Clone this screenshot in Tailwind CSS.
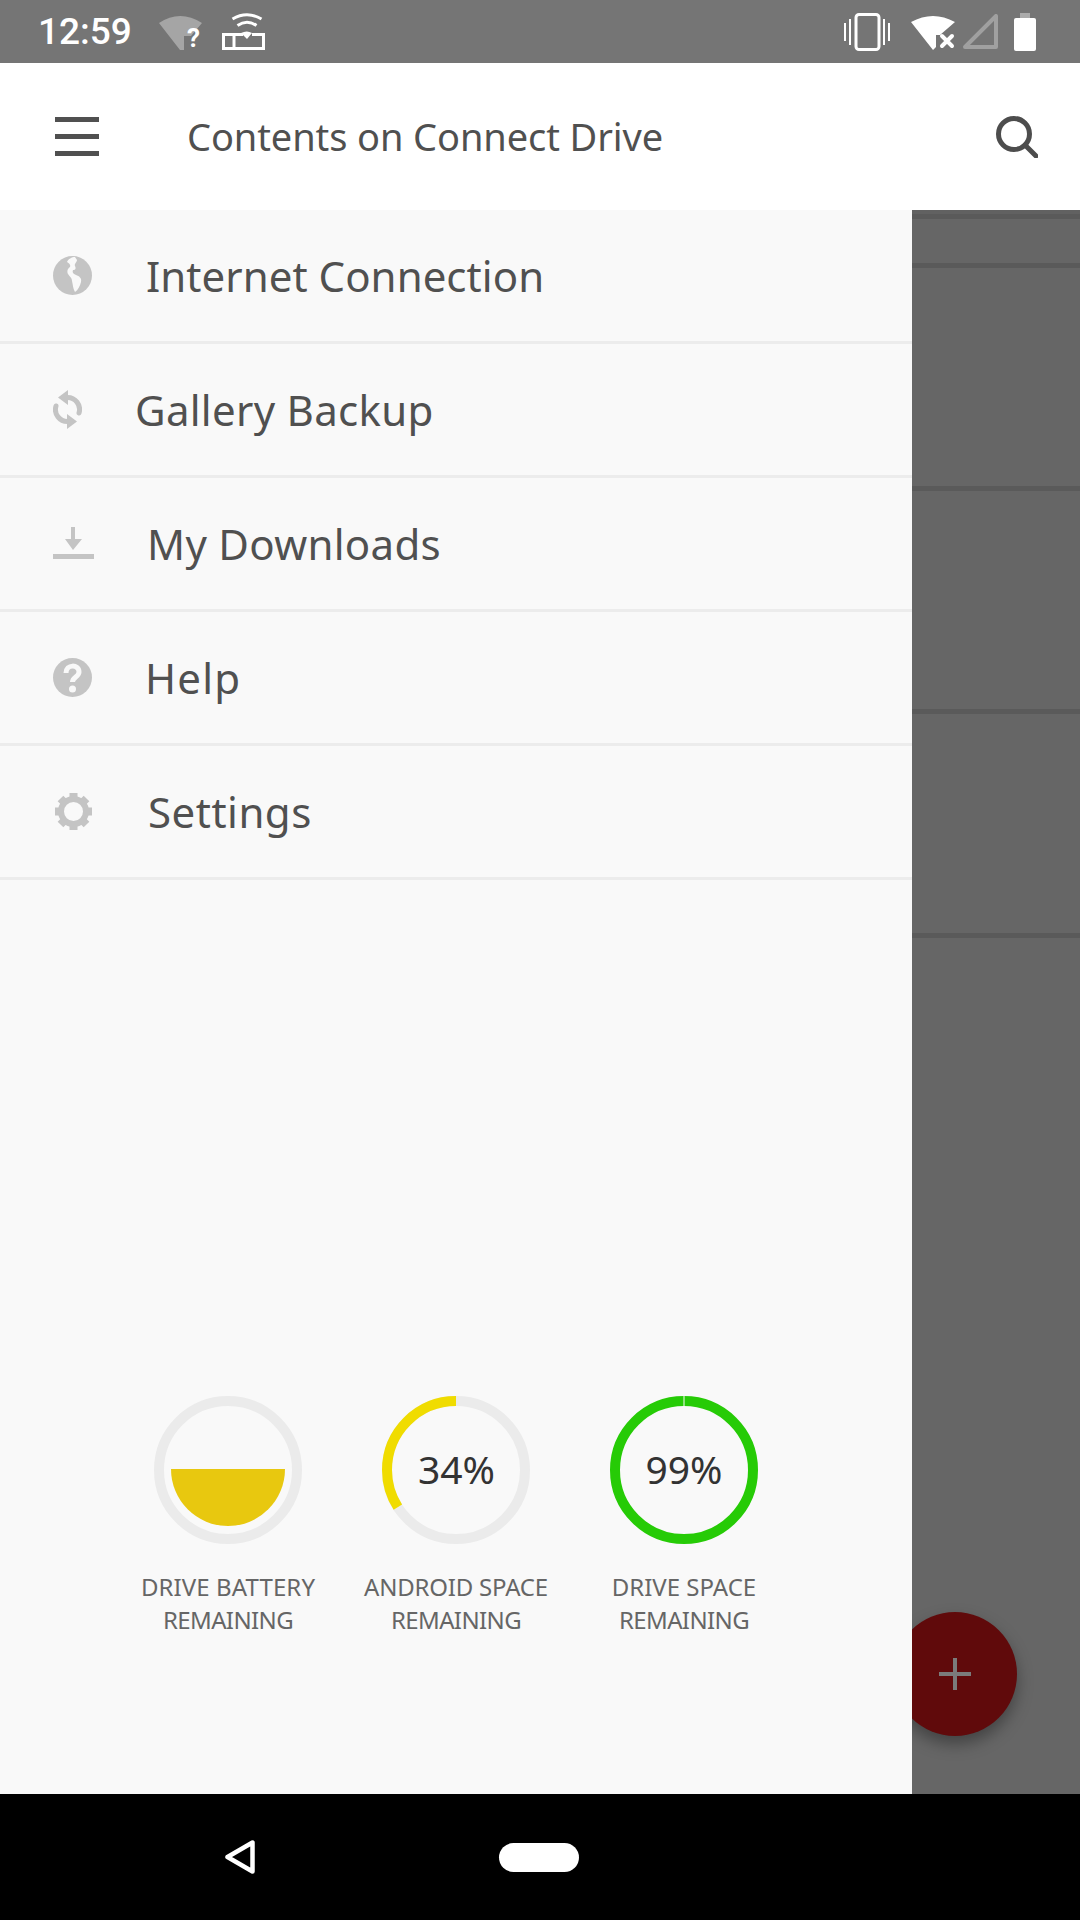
<!DOCTYPE html>
<html lang="en">
<head>
    <meta charset="UTF-8">
    <title>Contents on Connect Drive</title>
    <script src="https://cdn.jsdelivr.net/npm/@tailwindcss/browser@4"></script>
</head>
<body class="bg-black">
<div class="relative w-[1080px] h-[1920px] flex flex-col overflow-hidden font-['Noto_Sans',sans-serif]">

    <!-- status bar -->
    <div class="h-[63px] bg-[#757575] flex items-center justify-between shrink-0">
        <div class="flex items-center pl-[38px]">
            <span class="text-[37px] font-medium text-white font-['Roboto',sans-serif] leading-[44px] w-[121px]">12:59</span>
            <div class="relative w-[43px] h-[36px]">
                <svg class="w-[43px] h-[36px]" viewBox="0 0 43 36">
                    <path d="M0 9 Q21 -5 43 9 L32 22 L25 22 L25 36 L21 36 Z" fill="#a5a5a5"/>
                </svg>
                <span class="absolute left-[28px] top-[9px] text-[26px] leading-[30px] font-bold text-white font-['Roboto',sans-serif]">?</span>
            </div>
            <svg class="w-[44px] h-[38px] ml-[20px]" viewBox="0 0 44 38" fill="none" stroke="#fff" stroke-width="3">
                <path d="M10.5 6 Q25 -2.5 39.5 6"/>
                <path d="M15.5 12.5 Q25 6 34.5 12.5"/>
                <path d="M19 20 Q25 17 30 20 L25 26 Z" fill="#fff" stroke="none"/>
                <path d="M21 21.5 H1.5 V35.5 H41.5 V21.5 H30"/>
                <path d="M12 21.5 V35.5"/>
            </svg>
        </div>
        <div class="flex items-center pr-[44px]">
            <svg class="w-[46px] h-[38px]" viewBox="0 0 46 38" fill="none" stroke="#fff">
                <rect x="12" y="1.5" width="23" height="35" rx="3" stroke-width="3"/>
                <path d="M1 10 V28 M6 6 V32 M40 6 V32 M45 10 V28" stroke-width="2"/>
            </svg>
            <svg class="w-[44px] h-[36px] ml-[21px]" viewBox="0 0 44 36">
                <path d="M0 8 Q22 -4 44 8 L29 21 L25 21 L25 33 L22 36 Z" fill="#fff"/>
                <path d="M31 22 L41 32 M41 22 L31 32" stroke="#fff" stroke-width="4" stroke-linecap="round"/>
            </svg>
            <svg class="w-[35px] h-[35px] ml-[8px]" viewBox="0 0 35 35" fill="none">
                <path d="M33 2 V33 H2 Z" stroke="#a0a0a0" stroke-width="4" stroke-linejoin="round"/>
            </svg>
            <div class="ml-[16px] flex flex-col items-center">
                <div class="w-[10px] h-[5px] bg-[#ababab]"></div>
                <div class="w-[22px] h-[33px] bg-white rounded-[2px]"></div>
            </div>
        </div>
    </div>

    <!-- app bar -->
    <header class="h-[147px] bg-white flex items-center shrink-0">
        <div class="ml-[55px] w-[44px] flex flex-col gap-[12px]">
            <div class="h-[5px] bg-[#505050]"></div>
            <div class="h-[5px] bg-[#505050]"></div>
            <div class="h-[5px] bg-[#505050]"></div>
        </div>
        <h1 class="ml-[88px] text-[38px] text-[#505050] tracking-[-0.1px]">Contents on Connect Drive</h1>
        <svg class="ml-auto mr-[42px] w-[42px] h-[42px]" viewBox="0 0 42 42" fill="none" stroke="#4d4d4d">
            <circle cx="18" cy="18" r="15.5" stroke-width="5"/>
            <path d="M29 29 L40 40" stroke-width="5" stroke-linecap="round"/>
        </svg>
    </header>

    <div class="flex flex-1 min-h-0">
        <!-- drawer -->
        <aside class="w-[912px] bg-[#f9f9f9] flex flex-col shrink-0 z-10">
            <a class="h-[134px] flex items-center pl-[53px] gap-[54px] border-b-[3px] border-[#ececec]">
                <svg class="w-[39px] h-[39px]" viewBox="0 0 39 39">
                    <circle cx="19.5" cy="19.5" r="19.5" fill="#c4c4c4"/>
                    <path d="M22 1 C19 1 15 3 14 6 C16 7 18 9 17 11 C14 13 14 16 15 18 C17 21 19 22 19 25 C20 29 20 33 22 36 C25 34 27 30 28 26 C29 22 26 20 23 19 C20 18 19 16 20 14 C23 14 23 12 22 10 C21 8 24 6 24 4 Z" fill="#f9f9f9"/>
                </svg>
                <span class="text-[42px] text-[#505050] tracking-[0.05px]">Internet Connection</span>
            </a>
            <a class="h-[134px] flex items-center pl-[53px] gap-[53px] border-b-[3px] border-[#ececec]">
                <svg class="w-[29px] h-[39px]" viewBox="0 0 29 39" fill="none" stroke="#c4c4c4" stroke-width="5">
                    <path d="M14 7.5 A12 12 0 0 1 26 23" stroke-linecap="round"/>
                    <path d="M15 31.5 A12 12 0 0 1 3 16" stroke-linecap="round"/>
                    <path d="M15 0 V15 L5 7.5 Z" fill="#c4c4c4" stroke="none"/>
                    <path d="M14 24 V39 L24 31.5 Z" fill="#c4c4c4" stroke="none"/>
                </svg>
                <span class="text-[42px] text-[#505050] tracking-[0.3px]">Gallery Backup</span>
            </a>
            <a class="h-[134px] flex items-center pl-[53px] gap-[53px] border-b-[3px] border-[#ececec]">
                <svg class="w-[41px] h-[33px]" viewBox="0 0 41 33">
                    <path d="M18 0 H22 V12 H29 L20 23 L12 12 H18 Z" fill="#c4c4c4"/>
                    <rect x="0" y="27" width="41" height="5" fill="#c4c4c4"/>
                </svg>
                <span class="text-[42px] text-[#505050] tracking-[0.3px]">My Downloads</span>
            </a>
            <a class="h-[134px] flex items-center pl-[53px] gap-[53px] border-b-[3px] border-[#ececec]">
                <svg class="w-[39px] h-[39px]" viewBox="0 0 39 39">
                    <circle cx="19.5" cy="19.5" r="19.5" fill="#c4c4c4"/>
                    <path d="M13 15 C13 6 26 6 26 14 C26 19 19.5 19 19.5 24" fill="none" stroke="#f9f9f9" stroke-width="5"/>
                    <circle cx="19.5" cy="31" r="3.5" fill="#f9f9f9"/>
                </svg>
                <span class="text-[42px] text-[#505050] tracking-[1.2px]">Help</span>
            </a>
            <a class="h-[134px] flex items-center pl-[54px] gap-[55px] border-b-[3px] border-[#ececec]">
                <svg class="w-[39px] h-[39px]" viewBox="0 0 39 39" fill="none" stroke="#c4c4c4">
                    <circle cx="19.5" cy="19.5" r="12.5" stroke-width="6"/>
                    <path d="M19.5 1 V7 M19.5 32 V38 M1 19.5 H7 M32 19.5 H38 M6.5 6.5 L10.5 10.5 M28.5 28.5 L32.5 32.5 M32.5 6.5 L28.5 10.5 M10.5 28.5 L6.5 32.5" stroke-width="8"/>
                </svg>
                <span class="text-[42px] text-[#505050] tracking-[0.5px]">Settings</span>
            </a>

            <!-- gauges -->
            <div class="mt-auto mb-[158px] ml-[114px] grid grid-cols-[228px_228px_228px]">
                <div class="flex flex-col items-center">
                    <div class="relative w-[148px] h-[148px] rounded-full border-[10px] border-[#ebebeb]">
                        <div class="absolute left-[7px] top-[63px] w-[114px] h-[57px] bg-[#e8c80f] rounded-b-[57px]"></div>
                    </div>
                    <p class="mt-[26px] text-center text-[24px] leading-[33px] text-[#666] tracking-[0.1px]">DRIVE BATTERY<br><span class="tracking-[-0.6px]">REMAINING</span></p>
                </div>
                <div class="flex flex-col items-center">
                    <div class="relative w-[148px] h-[148px] flex items-center justify-center pl-[1px] pb-[2px]">
                        <svg class="absolute inset-0" width="148" height="148" viewBox="0 0 148 148" fill="none" stroke-width="10">
                            <circle cx="74" cy="74" r="69" stroke="#ebebeb"/>
                            <circle cx="74" cy="74" r="69" stroke="#f0dc00" stroke-dasharray="147.4 433.5" transform="rotate(-90 74 74) scale(1 -1) translate(0 -148)"/>
                        </svg>
                        <span class="text-[39px] text-[#333]">34%</span>
                    </div>
                    <p class="mt-[26px] text-center text-[24px] leading-[33px] text-[#666] tracking-[-0.2px]">ANDROID SPACE<br><span class="tracking-[-0.6px]">REMAINING</span></p>
                </div>
                <div class="flex flex-col items-center">
                    <div class="relative w-[148px] h-[148px] flex items-center justify-center pb-[2px]">
                        <svg class="absolute inset-0" width="148" height="148" viewBox="0 0 148 148" fill="none" stroke-width="10">
                            <circle cx="74" cy="74" r="69" stroke="#26cb06"/>
                            <path d="M74 0 V10" stroke="#f9f9f9" stroke-width="1"/>
                        </svg>
                        <span class="text-[39px] text-[#333]">99%</span>
                    </div>
                    <p class="mt-[26px] text-center text-[24px] leading-[33px] text-[#666]">DRIVE SPACE<br><span class="tracking-[-0.6px]">REMAINING</span></p>
                </div>
            </div>
        </aside>

        <!-- dimmed content behind the drawer -->
        <div class="flex-1 bg-[#666666]">
            <div class="h-[4px] bg-[#616161]"></div>
            <div class="h-[5px] bg-[#5a5a5a]"></div>
            <div class="h-[49px] border-b-[5px] border-[#5a5a5a]"></div>
            <div class="h-[223px] border-b-[5px] border-[#5a5a5a]"></div>
            <div class="h-[223px] border-b-[5px] border-[#5a5a5a]"></div>
            <div class="h-[224px] border-b-[5px] border-[#5a5a5a]"></div>
        </div>
    </div>

    <!-- floating button -->
    <div class="absolute left-[893px] top-[1612px] w-[124px] h-[124px] rounded-full bg-[#600a0b] shadow-[0_8px_16px_rgba(0,0,0,0.35)] flex items-center justify-center">
        <svg class="w-[32px] h-[32px]" viewBox="0 0 32 32"><path d="M14 0 H18 V14 H32 V18 H18 V32 H14 V18 H0 V14 H14 Z" fill="#7b7b7b"/></svg>
    </div>

    <!-- nav bar -->
    <nav class="h-[126px] bg-black flex items-center shrink-0 relative z-10">
        <svg class="ml-[225px] w-[30px] h-[34px]" viewBox="0 0 30 34" fill="none">
            <path d="M2.5 17 L27.5 2.5 V31.5 Z" stroke="#fff" stroke-width="4.5" stroke-linejoin="round"/>
        </svg>
        <div class="ml-[244px] w-[80px] h-[29px] rounded-full bg-white"></div>
    </nav>
</div>
</body>
</html>
